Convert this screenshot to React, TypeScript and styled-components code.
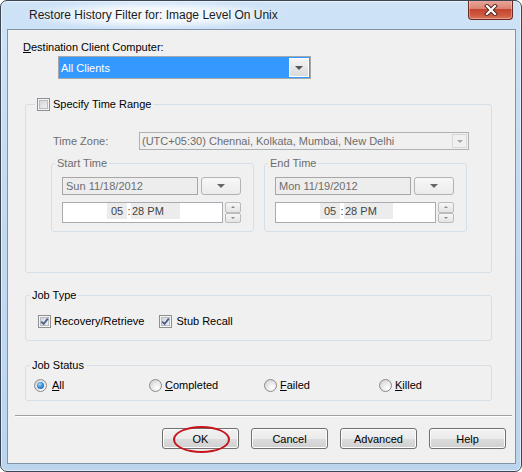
import styled, { createGlobalStyle } from "styled-components";

const GlobalStyle = createGlobalStyle`
  html, body {
    margin: 0;
    padding: 0;
    background: #fff;
  }
  body {
    font-family: "Liberation Sans", Arial, sans-serif;
    font-size: 11px;
    color: #000;
  }
  * {
    box-sizing: border-box;
  }
`;

const Window = styled.div`
  width: 522px;
  height: 472px;
  border: 1px solid #3b4654;
  border-radius: 7px;
  background: linear-gradient(to bottom, #cfe3f7 0%, #c3daf2 40%, #bcd5ef 100%);
  box-shadow: inset 0 0 0 1px rgba(255, 255, 255, 0.55);
  display: flex;
  flex-direction: column;
  overflow: hidden;
`;

const TitleBar = styled.div`
  height: 28px;
  flex-shrink: 0;
  display: flex;
  align-items: flex-start;
  justify-content: space-between;
  padding: 0 8px 0 22px;
`;

const Title = styled.span`
  font-size: 12px;
  line-height: 28px;
  padding: 0 6px;
  color: #1b1b1b;
  background: radial-gradient(
    ellipse at center,
    rgba(255, 255, 255, 0.75) 35%,
    rgba(255, 255, 255, 0) 72%
  );
`;

const CloseButton = styled.div`
  margin-top: -1px;
  width: 45px;
  height: 20px;
  border: 1px solid #6b2a22;
  border-top: none;
  border-radius: 0 0 4px 4px;
  background: linear-gradient(
    to bottom,
    #e9ab9e 0%,
    #dc8472 45%,
    #c4452f 50%,
    #cf5a40 80%,
    #dc7a5e 100%
  );
  box-shadow: inset 0 0 0 1px rgba(255, 255, 255, 0.3);
  display: flex;
  align-items: center;
  justify-content: center;
`;

const Client = styled.div`
  flex: 1;
  margin: 0 5px 7px 6px;
  border: 1px solid #8294a8;
  background: #f0f0f0;
  display: flex;
  flex-direction: column;
`;

const FieldLabel = styled.div`
  margin: 10px 0 0 15px;
  line-height: 14px;
`;

const ClientCombo = styled.div`
  margin: 2px 0 0 50px;
  width: 253px;
  height: 23px;
  border: 1px solid #a4a9ae;
  background: #3399ff;
  display: flex;
  align-items: stretch;
`;

const ComboText = styled.span<{ $disabled?: boolean }>`
  flex: 1;
  padding-left: 2px;
  display: flex;
  align-items: center;
  color: ${(p) => (p.$disabled ? "#6d6d6d" : "#fff")};
  white-space: nowrap;
`;

const ComboButton = styled.span<{ $small?: boolean }>`
  width: ${(p) => (p.$small ? 15 : 20)}px;
  margin: 1px;
  border: 1px solid ${(p) => (p.$small ? "#d8d8d8" : "#fff")};
  background: ${(p) =>
    p.$small ? "#f0f0f0" : "linear-gradient(to bottom, #f5f5f5, #dadada)"};
  display: flex;
  align-items: center;
  justify-content: center;
`;

const Arrow = styled.span<{ $color?: string; $size?: number }>`
  width: 0;
  height: 0;
  border-left: ${(p) => p.$size ?? 4}px solid transparent;
  border-right: ${(p) => p.$size ?? 4}px solid transparent;
  border-top: ${(p) => p.$size ?? 4}px solid ${(p) => p.$color ?? "#555"};
`;

const Group = styled.fieldset<{ $top: number; $left: number; $width: number }>`
  margin: ${(p) => p.$top}px 0 0 ${(p) => p.$left}px;
  width: ${(p) => p.$width}px;
  padding: 0;
  border: 1px solid #d5dfe5;
  border-radius: 3px;
  min-width: 0;
`;

const Legend = styled.legend<{ $offset: number; $disabled?: boolean }>`
  margin-left: ${(p) => p.$offset}px;
  padding: 0 2px;
  line-height: 14px;
  display: flex;
  align-items: center;
  gap: 3px;
  color: ${(p) => (p.$disabled ? "#6d6d6d" : "#000")};
`;

const GroupBody = styled.div<{ $pad: string }>`
  padding: ${(p) => p.$pad};
`;

const TimeZoneRow = styled.div`
  margin-top: 21px;
  padding-left: 27px;
  display: flex;
  align-items: center;
`;

const DimLabel = styled.span`
  width: 86px;
  color: #6d6d6d;
  line-height: 14px;
`;

const TimeZoneCombo = styled.div`
  width: 330px;
  height: 18px;
  border: 1px solid #adb2b5;
  background: #f0f0f0;
  display: flex;
  align-items: stretch;
`;

const SubGroups = styled.div`
  margin-top: 6px;
  padding-left: 25px;
  display: flex;
  gap: 10px;
`;

const FieldRow = styled.div<{ $top: number }>`
  margin-top: ${(p) => p.$top}px;
  display: flex;
  align-items: flex-start;
`;

const DateField = styled.div`
  width: 136px;
  height: 18px;
  border: 1px solid #a7a7a7;
  background: #ededed;
  color: #6d6d6d;
  padding-left: 3px;
  line-height: 16px;
`;

const DateButton = styled.div`
  margin-left: 3px;
  width: 40px;
  height: 18px;
  border: 1px solid #b3b3b3;
  border-radius: 3px;
  background: linear-gradient(to bottom, #f7f7f7, #ebebeb);
  display: flex;
  align-items: center;
  justify-content: center;
`;

const TimeField = styled.div`
  width: 161px;
  height: 21px;
  border: 1px solid #a9abb0;
  background: #fff;
  padding: 0 0 0 44px;
  display: flex;
  align-items: flex-start;
  color: #444;
`;

const TimeSegment = styled.span<{ $width: number; $center?: boolean }>`
  width: ${(p) => p.$width}px;
  height: 16px;
  background: #ececec;
  line-height: 16px;
  text-align: ${(p) => (p.$center ? "center" : "left")};
  padding-left: ${(p) => (p.$center ? 0 : 1)}px;
`;

const TimeColon = styled.span`
  width: 4px;
  line-height: 16px;
  text-align: center;
`;

const Spin = styled.div`
  margin-left: 2px;
  width: 16px;
  height: 21px;
  display: flex;
  flex-direction: column;
`;

const SpinHalf = styled.span<{ $up?: boolean }>`
  flex: 1;
  border: 1px solid #bcbcbc;
  border-radius: 2px;
  background: linear-gradient(to bottom, #f6f6f6, #e4e4e4);
  display: flex;
  align-items: center;
  justify-content: center;
  & > span {
    width: 0;
    height: 0;
    border-left: 2px solid transparent;
    border-right: 2px solid transparent;
    ${(p) =>
      p.$up ? "border-bottom: 2px solid #8a8a8a;" : "border-top: 2px solid #8a8a8a;"}
  }
`;

const OptionRow = styled.div<{ $top: number; $left: number }>`
  margin-top: ${(p) => p.$top}px;
  padding-left: ${(p) => p.$left}px;
  display: flex;
  align-items: center;
  line-height: 14px;
  height: 14px;
`;

const Option = styled.label<{ $width?: number; $gap: number }>`
  display: flex;
  align-items: center;
  gap: ${(p) => p.$gap}px;
  width: ${(p) => (p.$width ? `${p.$width}px` : "auto")};
  margin-right: ${(p) => (p.$width ? 0 : 15)}px;
`;

const CheckBox = styled.span`
  width: 13px;
  height: 13px;
  flex-shrink: 0;
  border: 1px solid #8f8f8f;
  background: linear-gradient(135deg, #cdd0d5, #f6f6f6);
  box-shadow: inset 0 0 0 1px #f4f4f4, inset 0 0 0 2px #b8bcc2;
  display: flex;
  align-items: center;
  justify-content: center;
`;

const Radio = styled.span<{ $checked?: boolean }>`
  width: 13px;
  height: 13px;
  flex-shrink: 0;
  border: 1px solid #8b8b8b;
  border-radius: 50%;
  background: radial-gradient(circle at 65% 70%, #ffffff 0%, #e9e9e9 45%, #c9c9c9 100%);
  display: flex;
  align-items: center;
  justify-content: center;
  &::after {
    content: "";
    display: ${(p) => (p.$checked ? "block" : "none")};
    width: 7px;
    height: 7px;
    border-radius: 50%;
    background: radial-gradient(circle at 40% 35%, #a8dcff 0%, #3b8fd8 45%, #174f91 100%);
  }
`;

const Separator = styled.div`
  margin: 14px 0 0 7px;
  width: 497px;
  border-top: 1px solid #a0a0a0;
  border-bottom: 1px solid #fff;
`;

const ButtonRow = styled.div`
  margin-top: 11px;
  padding-right: 9px;
  display: flex;
  justify-content: flex-end;
  gap: 12px;
`;

const ButtonWrap = styled.div`
  position: relative;
`;

const Button = styled.div`
  width: 77px;
  height: 21px;
  border: 1px solid #707070;
  border-radius: 3px;
  background: linear-gradient(
    to bottom,
    #f2f2f2 0%,
    #ebebeb 50%,
    #dddddd 51%,
    #cfcfcf 100%
  );
  box-shadow: inset 0 0 0 1px #fcfcfc;
  display: flex;
  align-items: center;
  justify-content: center;
`;

const Highlight = styled.span`
  position: absolute;
  left: 11px;
  top: -2px;
  width: 57px;
  height: 27px;
  border: 2px solid #c5161d;
  border-radius: 50%;
  pointer-events: none;
`;

function Check() {
  return (
    <svg width="9" height="9" viewBox="0 0 9 9">
      <path d="M1.2 4.6 L3.6 7 L7.8 1.6" fill="none" stroke="#4b5c8c" strokeWidth="1.8" />
    </svg>
  );
}

function TimeGroup({ label, date }: { label: string; date: string }) {
  return (
    <Group $top={0} $left={0} $width={203}>
      <Legend $offset={3} $disabled>
        {label}
      </Legend>
      <GroupBody $pad="0 0 8px 10px">
        <FieldRow $top={7}>
          <DateField>{date}</DateField>
          <DateButton>
            <Arrow $color="#666" />
          </DateButton>
        </FieldRow>
        <FieldRow $top={7}>
          <TimeField>
            <TimeSegment $width={20} $center>
              05
            </TimeSegment>
            <TimeColon>:</TimeColon>
            <TimeSegment $width={49}>28 PM</TimeSegment>
          </TimeField>
          <Spin>
            <SpinHalf $up>
              <span />
            </SpinHalf>
            <SpinHalf>
              <span />
            </SpinHalf>
          </Spin>
        </FieldRow>
      </GroupBody>
    </Group>
  );
}

export default function App() {
  return (
    <>
      <GlobalStyle />
      <Window>
        <TitleBar>
          <Title>Restore History Filter for: Image Level On Unix</Title>
          <CloseButton>
            <svg width="14" height="12" viewBox="0 0 14 12">
              <path d="M3 2 L11 10 M11 2 L3 10" stroke="#4a2420" strokeWidth="4" strokeLinecap="square" />
              <path d="M3 2 L11 10 M11 2 L3 10" stroke="#fff" strokeWidth="2.2" strokeLinecap="square" />
            </svg>
          </CloseButton>
        </TitleBar>
        <Client>
          <FieldLabel>
            <u>D</u>estination Client Computer:
          </FieldLabel>
          <ClientCombo>
            <ComboText>All Clients</ComboText>
            <ComboButton>
              <Arrow />
            </ComboButton>
          </ClientCombo>

          <Group $top={18} $left={17} $width={467}>
            <Legend $offset={9}>
              <CheckBox />
              Specify Time Range
            </Legend>
            <GroupBody $pad="0 0 40px 0">
              <TimeZoneRow>
                <DimLabel>Time Zone:</DimLabel>
                <TimeZoneCombo>
                  <ComboText $disabled>(UTC+05:30) Chennai, Kolkata, Mumbai, New Delhi</ComboText>
                  <ComboButton $small>
                    <Arrow $color="#a6a6a6" $size={3} />
                  </ComboButton>
                </TimeZoneCombo>
              </TimeZoneRow>
              <SubGroups>
                <TimeGroup label="Start Time" date="Sun 11/18/2012" />
                <TimeGroup label="End Time" date="Mon 11/19/2012" />
              </SubGroups>
            </GroupBody>
          </Group>

          <Group $top={15} $left={17} $width={467}>
            <Legend $offset={4}>Job Type</Legend>
            <GroupBody $pad="0 0 12px 0">
              <OptionRow $top={12} $left={12}>
                <Option $gap={3}>
                  <CheckBox>
                    <Check />
                  </CheckBox>
                  Recovery/Retrieve
                </Option>
                <Option $gap={4}>
                  <CheckBox>
                    <Check />
                  </CheckBox>
                  Stub Recall
                </Option>
              </OptionRow>
            </GroupBody>
          </Group>

          <Group $top={17} $left={17} $width={467}>
            <Legend $offset={4}>Job Status</Legend>
            <GroupBody $pad="0 0 8px 0">
              <OptionRow $top={6} $left={8}>
                <Option $width={115} $gap={5}>
                  <Radio $checked />
                  <span>
                    <u>A</u>ll
                  </span>
                </Option>
                <Option $width={115} $gap={3}>
                  <Radio />
                  <span>
                    <u>C</u>ompleted
                  </span>
                </Option>
                <Option $width={115} $gap={3}>
                  <Radio />
                  <span>
                    <u>F</u>ailed
                  </span>
                </Option>
                <Option $width={100} $gap={3}>
                  <Radio />
                  <span>
                    <u>K</u>illed
                  </span>
                </Option>
              </OptionRow>
            </GroupBody>
          </Group>

          <Separator />
          <ButtonRow>
            <ButtonWrap>
              <Button>OK</Button>
              <Highlight />
            </ButtonWrap>
            <Button>Cancel</Button>
            <Button>Advanced</Button>
            <Button>Help</Button>
          </ButtonRow>
        </Client>
      </Window>
    </>
  );
}
